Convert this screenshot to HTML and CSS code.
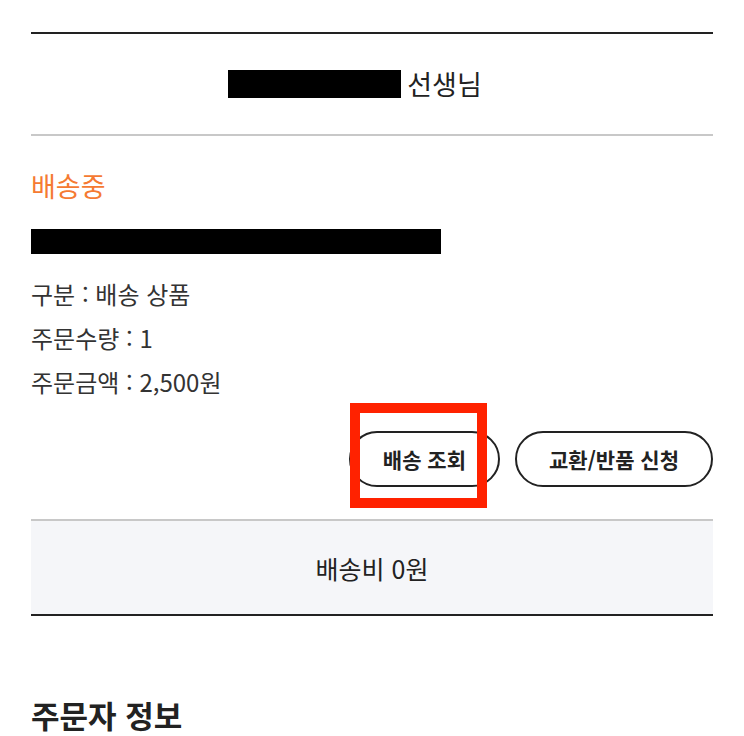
FILE: index.html
```html
<!DOCTYPE html>
<html lang="ko">
<head>
    <meta charset="UTF-8">
    <meta name="viewport" content="width=device-width, initial-scale=1.0">
    <title>주문 상세</title>
    <link rel="stylesheet" href="styles.css">
</head>
<body>

    <div class="order-wrap">
        <div class="greeting">
            <span class="redacted redacted-name"></span>
            <span class="greeting-text">선생님</span>
        </div>

        <div class="order-item">
            <p class="status">배송중</p>
            <div class="product-name"><span class="redacted redacted-product"></span></div>

            <ul class="info-list">
                <li>구분 : 배송 상품</li>
                <li>주문수량 : 1</li>
                <li>주문금액 : 2,500원</li>
            </ul>

            <div class="button-container">
                <div class="btn-track">
                    <button type="button" class="btn">배송 조회</button>
                    <span class="highlight-box"></span>
                </div>
                <button type="button" class="btn">교환/반품 신청</button>
            </div>
        </div>

        <div class="shipping-fee">배송비 0원</div>

        <h2 class="section-title">주문자 정보</h2>
    </div>

</body>
</html>
```

FILE: styles.css
```css
body {
    font-family: "Noto Sans CJK KR", "Noto Sans", sans-serif;
    background-color: #ffffff;
    color: #222222;
    margin: 0;
}
.order-wrap {
    margin: 32px 31px 0;
}
.greeting {
    display: flex;
    justify-content: center;
    align-items: center;
    height: 100px;
    padding-right: 34px;
    border-top: 2px solid #222222;
    border-bottom: 2px solid #c8c8c8;
}
.redacted {
    display: inline-block;
    background: #000000;
}
.redacted-name {
    width: 173px;
    height: 28px;
    margin-right: 6px;
}
.greeting-text {
    font-size: 27px;
    line-height: 32px;
    color: #222222;
}
.order-item {
    padding-bottom: 32px;
    border-bottom: 2px solid #c8c8c8;
}
.status {
    margin: 34px 0 0;
    font-size: 27px;
    line-height: 32px;
    color: #f57a32;
}
.product-name {
    margin-top: 27px;
    height: 25px;
}
.redacted-product {
    width: 410px;
    height: 25px;
}
.info-list {
    list-style: none;
    margin: 18px 0 0;
    padding: 0;
}
.info-list li {
    font-size: 24px;
    line-height: 44px;
    color: #333333;
}
.button-container {
    display: flex;
    justify-content: flex-end;
    gap: 15px;
    margin-top: 27px;
}
.btn-track {
    position: relative;
}
.btn {
    height: 56px;
    padding: 0 32px;
    font-family: inherit;
    font-size: 21px;
    font-weight: bold;
    color: #222222;
    background: #ffffff;
    border: 2px solid #222222;
    border-radius: 28px;
    cursor: pointer;
}
.highlight-box {
    position: absolute;
    left: 1px;
    top: -28px;
    width: 117px;
    height: 85px;
    border: 10px solid #ff2200;
}
.shipping-fee {
    display: flex;
    justify-content: center;
    align-items: center;
    height: 93px;
    font-size: 25px;
    color: #222222;
    background-color: #f5f6f9;
    border-bottom: 2px solid #222222;
}
.section-title {
    margin: 79px 0 0;
    font-size: 31px;
    line-height: 40px;
    font-weight: bold;
    color: #222222;
}
```
